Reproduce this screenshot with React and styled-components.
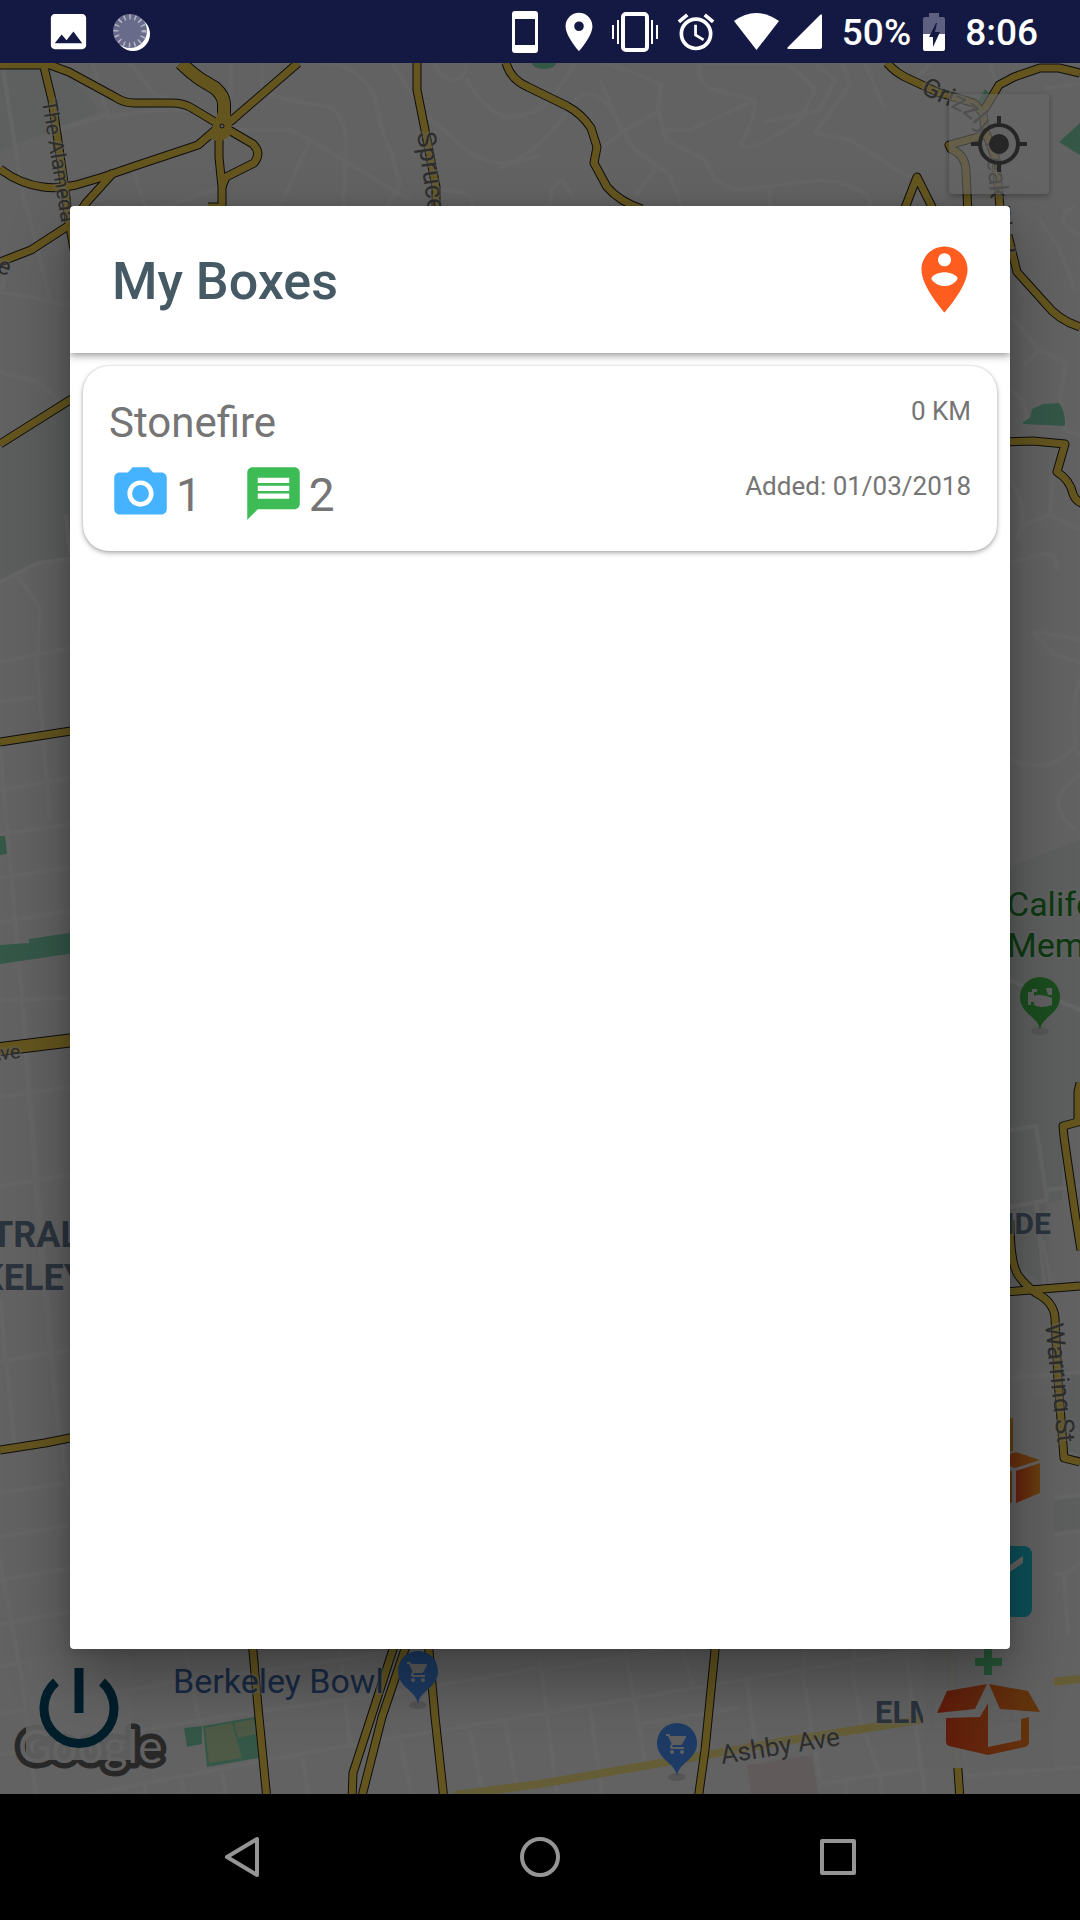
import React from "react";
import styled, { createGlobalStyle } from "styled-components";
import {
  MdImage,
  MdPlace,
  MdAlarm,
  MdPersonPinCircle,
  MdPhotoCamera,
  MdMessage,
  MdShoppingCart,
} from "react-icons/md";

const GlobalStyle = createGlobalStyle`
  *, *::before, *::after { box-sizing: border-box; }
  body { margin: 0; background: #000; font-family: Roboto, "Noto Sans", sans-serif; }
  button { font: inherit; color: inherit; border: 0; padding: 0; background: none; cursor: pointer; }
  h1, h2, p, ul { margin: 0; padding: 0; font-weight: inherit; }
  svg { display: block; }
`;

const Screen = styled.div`
  display: flex;
  flex-direction: column;
  min-height: 100vh;
`;

/* Status bar */
const StatusBar = styled.header`
  display: flex;
  align-items: center;
  justify-content: space-between;
  height: 63px;
  padding: 0 42px 0 45px;
  background: #131942;
  color: #fff;
`;

const StatusGroup = styled.div`
  display: flex;
  align-items: center;
  gap: ${(p) => p.$gap}px;
`;

const StatusText = styled.span`
  font-size: 37px;
  line-height: 42px;
  font-weight: 500;
  padding-top: 3px;
`;

/* Map stage */
const Stage = styled.main`
  position: relative;
  display: flex;
  flex: 1;
  overflow: hidden;
  background: #f5f5f5;
`;

const MapArt = styled.svg`
  position: absolute;
  inset: 0;
  width: 100%;
  height: 100%;
`;

const LocateButton = styled.button`
  position: absolute;
  top: 31px;
  right: 31px;
  display: grid;
  place-items: center;
  width: 100px;
  height: 100px;
  border-radius: 4px;
  background: rgba(255, 255, 255, 0.6);
  box-shadow: 0 2px 6px rgba(0, 0, 0, 0.3);
`;

const PowerButton = styled.button`
  position: absolute;
  left: 26px;
  bottom: 34px;
  display: grid;
  place-items: center;
  width: 105px;
  height: 105px;
  background: rgba(248, 248, 248, 0.88);
`;

const MapMenu = styled.div`
  position: absolute;
  right: 26px;
  bottom: 26px;
  display: flex;
  flex-direction: column;
  gap: 20px;
  padding: 21px 13px 13px;
  background: rgba(243, 243, 243, 0.96);
`;

const MenuButton = styled.button`
  display: grid;
  place-items: center;
  height: ${(p) => p.$height}px;
`;

/* Dialog */
const Scrim = styled.div`
  position: relative;
  display: flex;
  flex: 1;
  padding: 143px 70px 145px;
  background: rgba(0, 0, 0, 0.6);
`;

const Dialog = styled.section`
  flex: 1;
  border-radius: 4px;
  background: #fff;
  box-shadow: 0 30px 60px rgba(0, 0, 0, 0.34), 0 0 14px rgba(0, 0, 0, 0.12);
  overflow: hidden;
`;

const DialogHeader = styled.div`
  display: flex;
  align-items: center;
  justify-content: space-between;
  height: 147px;
  padding: 0 26px 0 42px;
  box-shadow: 0 2px 8px rgba(0, 0, 0, 0.45);
`;

const Title = styled.h1`
  color: #455a64;
  font-size: 52px;
  line-height: 64px;
  font-weight: 500;
  padding-top: 4px;
`;

const BoxList = styled.ul`
  padding: 13px;
  list-style: none;
`;

const BoxCard = styled.li`
  display: flex;
  justify-content: space-between;
  padding: 30px 26px 26px;
  border-radius: 26px;
  background: #fff;
  color: #757575;
  box-shadow: 0 2px 5px rgba(0, 0, 0, 0.32), 0 0 2px rgba(0, 0, 0, 0.16);
`;

const BoxMain = styled.div`
  display: flex;
  flex-direction: column;
  gap: 12px;
`;

const BoxName = styled.h2`
  font-size: 42px;
  line-height: 54px;
`;

const Counts = styled.div`
  display: flex;
  gap: 40px;
`;

const Count = styled.div`
  display: flex;
  align-items: flex-end;
  gap: 4px;
  font-size: 46px;
  line-height: 60px;

  svg { color: ${(p) => p.$color}; }
`;

const BoxMeta = styled.div`
  display: flex;
  flex-direction: column;
  gap: 45px;
  text-align: right;
  font-size: 26px;
  line-height: 30px;
`;

/* Navigation bar */
const NavBar = styled.nav`
  display: grid;
  grid-template-columns: repeat(3, 1fr);
  height: 126px;
  padding: 0 93px;
  background: #000;
`;

const NavButton = styled.button`
  display: grid;
  place-items: center;
`;

const mainRoads = [
  "M0 65H40L50 65L69 72L115 97Q124 103 134 103H172Q182 103 190 107L220 125",
  "M44 67L52 100L65 190L69 222L76 260",
  "M298 63L231 121L220 126L198 145L138 165L103 177L76 185Q58 189 43 187Q20 184 0 169",
  "M114 172L86 203L78 215",
  "M219 126V157L222 187V207L208 207",
  "M222 126L253 144Q262 153 254 163L226 177L222 187",
  "M417 63V90L425 130L436 187V215",
  "M506 63Q511 80 528 87L567 106Q582 114 591 128L597 147L594 163L607 187Q620 202 642 209",
  "M887 63Q895 72 905 77L937 92L974 103L983 113L985 130L996 160L1001 220",
  "M983 112L999 85L1014 77L1040 68H1059L1080 73",
  "M985 135L949 145L951 149Q966 155 966 172L968 215",
  "M903 213L917 177L935 213",
  "M0 262L31 250L68 226",
  "M0 444L70 400L110 380",
  "M0 742L90 728",
  "M0 1450L45 1443L90 1434",
  "M1008 235L1017 272L1045 303Q1058 320 1080 327",
  "M1000 442L1033 441L1065 444L1057 472Q1070 480 1073 494Q1076 502 1084 504",
  "M1080 1083L1078 1092V1122L1063 1126L1064 1137L1075 1213L1081 1250",
  "M1010 1220Q1010 1262 1018 1275Q1025 1285 1036 1293Q1054 1302 1055 1318L1058 1380L1064 1458L1080 1462",
  "M1005 1292L1030 1290L1080 1286",
  "M252 1640L258 1707L267 1800",
  "M396 1640L353 1773L352 1800",
  "M408 1640L382 1717L361 1800",
  "M428 1640L435 1717L444 1800",
  "M716 1640L705 1750L698 1800",
  "M950 1640L958 1770L960 1800",
];

const wideRoads = ["M181 63Q190 72 200 79L215 88Q224 96 224 104V124", "M0 1049L90 1038"];

const paleRoads = ["M455 1795L540 1784L678 1760L791 1740L919 1720L1053 1682L1080 1679"];

const streets = [
  "M3 68L25 210", "M92 63L108 115L60 128", "M130 63L155 95L185 103L205 122", "M231 63V100",
  "M262 63V90Q270 98 330 107Q348 120 346 150L343 210", "M320 63Q360 63 376 100Q380 130 392 155L400 185L385 210",
  "M235 130H290L310 140L343 160L410 200", "M310 140L280 207", "M392 63L425 115Q440 125 460 145Q495 175 540 155",
  "M435 63Q440 80 455 80Q468 75 466 63M466 78Q485 112 505 116Q530 118 540 105", "M440 190Q475 190 473 207",
  "M108 118Q170 105 205 112M58 130L108 115", "M133 170L145 207M222 187L165 207", "M575 63Q560 90 540 110Q510 120 500 117",
  "M600 63L628 70L661 85L658 110L666 140L705 160L715 180L735 190L825 180Q875 190 870 206", "M658 112L622 132L600 80",
  "M500 167Q540 155 575 100Q600 80 622 130L635 150L670 175L682 206", "M622 132L600 150M655 170L635 196",
  "M665 130H690L755 100Q755 120 740 145Q750 155 800 120L815 90Q795 65 780 63H700Q695 85 715 90L755 100",
  "M765 122L820 110L835 80L815 63", "M842 63L850 85L815 133L850 140L905 175L916 177", "M865 63L885 110M930 63L910 85",
  "M550 207L552 188L562 180L575 200", "M770 190V206", "M1045 88L1080 84M990 63L995 80",
  "M25 200L50 300M0 292L25 296L70 305M0 265Q8 280 0 292", "M0 372L38 382L58 400",
  "M0 582L38 563L70 559M17 575L40 608L37 660L50 820", "M0 662L70 648M0 702L38 697M66 515L70 555",
  "M0 745L22 1000L58 1420L70 1500", "M0 790L70 778M0 834L70 824M0 878L70 867M0 922L70 911M0 1000L70 998",
  "M22 1000L35 1185L55 1400", "M0 1097L70 1087M0 1186L70 1175M0 1361L70 1350M0 1493L70 1482M0 1537L70 1525M0 1580L70 1568M0 1624L70 1612",
  "M0 1300L15 1450M0 1560L22 1680L36 1794", "M1038 216L1060 250L1075 290M1075 207Q1055 215 1070 230L1080 235",
  "M1010 315L1040 350L1066 362L1060 395L1065 430L1080 435M1040 350L1023 365",
  "M1010 390Q1030 400 1025 425M1010 480Q1025 500 1021 526L1050 515L1080 530M1050 515L1053 472M1017 539L1021 526",
  "M1010 562L1045 554Q1058 554 1058 570M1032 632Q1060 635 1080 640M1032 632L1055 655L1080 662",
  "M1080 680Q1070 705 1075 745Q1055 775 1010 760M1075 750L1080 755M1080 775Q1040 800 1075 830",
  "M1010 980L1080 1010M1010 1130L1036 1126L1047 1200L1010 1207M1047 1190L1080 1186M1036 1200L1046 1300",
  "M1043 1240L1052 1290M1010 1378L1080 1372M1054 1498L1080 1495M1054 1534L1080 1531M1054 1574H1064L1068 1634M1064 1574L1080 1563",
  "M0 1667L60 1655M0 1714L175 1682L340 1660L540 1625M0 1755L200 1720L400 1692L540 1668", "M60 1800L240 1765L345 1746L540 1714",
  "M185 1649L200 1725M340 1649L350 1745M400 1740L411 1794M303 1758L308 1794M145 1780V1794M181 1780L184 1794M222 1773L226 1794",
  "M470 1730L482 1790M505 1722L517 1788", "M540 1671L860 1615M540 1714L920 1650M640 1724L740 1708",
  "M540 1660L557 1794M625 1649L645 1760M590 1708L602 1794M682 1649L693 1685",
  "M747 1680L757 1760M805 1649L803 1675L820 1780M855 1640L853 1675L862 1725L880 1775L882 1794M905 1649L925 1794",
  "M820 1784L925 1768M965 1776L1080 1767M846 1780V1794",
];

function MapPin({ x, y, color, children }) {
  return (
    <g transform={`translate(${x} ${y})`}>
      <ellipse cx="0" cy="34" rx="9" ry="4" fill="#d4d4d4" />
      <path d="M0 33C-2 19-20 17-20 0A20 20 0 0 1 20 0C20 17 2 19 0 33Z" fill={color} />
      {children}
    </g>
  );
}

function CityMap() {
  const halo = { stroke: "#f5f5f5", strokeWidth: 4, strokeOpacity: 0.4, paintOrder: "stroke", strokeLinejoin: "round" };
  return (
    <MapArt viewBox="0 63 1080 1731" preserveAspectRatio="xMidYMid slice" aria-label="Map of Berkeley" role="img">
      <path d="M0 63H60L100 110L55 130L0 150Z" fill="#eaefee" />
      <path d="M0 444L90 395V558L38 563L0 582Z" fill="#e6ecea" />
      <path d="M1000 870L1080 840V1110L1062 1126V1200L1000 1215Z" fill="#e9edec" />
      <path d="M1010 1190L1045 1190L1050 1290L1010 1260ZM1054 1500L1080 1497V1530L1054 1534ZM1060 1370H1080V1455L1068 1450Z" fill="#e9edec" />
      <path d="M747 1765L812 1755L818 1794H751Z" fill="#f0e0e0" />

      <g fill="none" stroke="#fdfdfd" strokeWidth="4" strokeLinejoin="round">
        {streets.map((d) => <path key={d} d={d} />)}
      </g>

      <g fill="#82d9b3">
        <ellipse cx="544" cy="63" rx="12" ry="6" />
        <path d="M1059 142L1080 123V155ZM985 89L992 96L982 108L978 102Z" />
        <path d="M0 836H5L7 854L0 855ZM0 945L29 943V939L75 932V953L0 964Z" />
        <path d="M1023 422L1030 418L1032 409L1043 404L1059 403Q1066 412 1065 426L1023 424Z" />
        <path d="M184 1728L202 1726V1744L187 1747ZM203 1726L255 1717L258 1758L207 1767Z" />
      </g>
      <path d="M205 1728L232 1723L242 1758L209 1763ZM234 1723L254 1719L256 1734L238 1738Z" fill="#c3dfb0" />

      <g fill="none" stroke="#fce884" strokeWidth="8">
        {paleRoads.map((d) => <path key={d} d={d} />)}
      </g>
      <g fill="none" strokeLinejoin="round">
        <g stroke="#222" strokeWidth="9">{mainRoads.map((d) => <path key={d} d={d} />)}</g>
        <g stroke="#222" strokeWidth="14">{wideRoads.map((d) => <path key={d} d={d} />)}</g>
        <g stroke="#fbd54f" strokeWidth="7">{mainRoads.map((d) => <path key={d} d={d} />)}</g>
        <g stroke="#fbd54f" strokeWidth="12">{wideRoads.map((d) => <path key={d} d={d} />)}</g>
      </g>
      <path d="M208 138L214 123L218 112L230 112L232 124L230 136L220 142Z" fill="#fbd54f" />
      <circle cx="222" cy="126" r="2" fill="#eee" stroke="#222" />

      <path id="grizzly" d="M920 93L950 107Q985 120 987 160L1003 330" fill="none" />
      <g fontFamily="Roboto, sans-serif" fill="#707070" fontSize="26" {...halo}>
        <text transform="translate(42 101) rotate(81)" fontSize="21">The Alameda</text>
        <text transform="translate(417 133) rotate(82)">Spruce St</text>
        <text><textPath href="#grizzly">Grizzly Peak Blvd</textPath></text>
        <text transform="translate(1045 1324) rotate(84)">Warring St</text>
        <text transform="translate(722 1764) rotate(-9)" fontSize="26">Ashby Ave</text>
        <text transform="translate(21 1058) rotate(-6)" fontSize="20" textAnchor="end">Ave</text>
        <text transform="translate(8 276) rotate(18)" fontSize="24" textAnchor="end">Ave</text>
      </g>
      <g fontFamily="Roboto, sans-serif" fill="#6c8098" fontWeight="700" {...halo}>
        <text x="80" y="1247" fontSize="36" textAnchor="end">CENTRAL</text>
        <text x="86" y="1290" fontSize="36" textAnchor="end">BERKELEY</text>
        <text x="1051" y="1234" fontSize="30" textAnchor="end">SOUTHSIDE</text>
        <text x="875" y="1723" fontSize="31">ELMWOOD</text>
      </g>
      <g fontFamily="Roboto, sans-serif" fontSize="34" {...halo}>
        <text x="1007" y="916" fill="#22902c">California</text>
        <text x="1007" y="957" fill="#22902c">Memorial</text>
        <text x="173" y="1693" fill="#4069ad">Berkeley Bowl</text>
      </g>

      <MapPin x={1040} y={997} color="#43be4b">
        <path d="M-12 8V-5H-6V-1Q0-4 12 1V8Q0 12-6 8V5H-9V8ZM-8-8h5v3h-5zM6-9h6v7H8zM2-3L10 1" fill="#eee" />
      </MapPin>
      <MapPin x={418} y={1671} color="#4a94fa">
        <MdShoppingCart x={-12} y={-11} size={24} color="#eee" />
      </MapPin>
      <MapPin x={677} y={1743} color="#4a94fa">
        <MdShoppingCart x={-12} y={-11} size={24} color="#eee" />
      </MapPin>

      <text x="18" y="1763" fontFamily="Lato, sans-serif" fontSize="46" fill="#f2f2f2" stroke="#646464" strokeWidth="11" paintOrder="stroke" strokeLinejoin="round">
        Google
      </text>
    </MapArt>
  );
}

const SyncingIcon = () => (
  <svg width="38" height="38" viewBox="0 0 38 38" aria-hidden="true">
    <circle cx="21" cy="21" r="17" fill="#fff" />
    <circle cx="18" cy="18" r="17" fill="#696b8b" />
    <circle cx="18" cy="18" r="14" fill="none" stroke="#b5b6c6" strokeWidth="5" strokeDasharray="1.5 3.9" />
  </svg>
);

const PhoneIcon = () => (
  <svg width="26" height="42" viewBox="0 0 26 42" aria-hidden="true">
    <path fillRule="evenodd" fill="#fff" d="M3 0H23Q26 0 26 3V39Q26 42 23 42H3Q0 42 0 39V3Q0 0 3 0ZM3 8V34H23V8Z" />
  </svg>
);

const VibrateIcon = () => (
  <svg width="46" height="40" viewBox="0 0 46 40" fill="none" stroke="#fff" aria-hidden="true">
    <rect x="11" y="2" width="24" height="36" rx="3" strokeWidth="4" />
    <path d="M1 13V27M6 8V32M40 8V32M45 13V27" strokeWidth="2" />
  </svg>
);

const WifiIcon = () => (
  <svg width="45" height="37" viewBox="0 0 45 37" aria-hidden="true">
    <path d="M0 8Q22-8 45 8L22.500 37Z" fill="#fff" />
  </svg>
);

const SignalIcon = () => (
  <svg width="35" height="35" viewBox="0 0 35 35" aria-hidden="true">
    <path d="M35 2V33Q35 35 33 35H2Q-1 35 1 33L33 1Q35-1 35 2Z" fill="#fff" />
  </svg>
);

const BatteryIcon = () => (
  <svg width="22" height="38" viewBox="0 0 22 38" aria-hidden="true">
    <path d="M0 21V6Q0 4 2 4H6V0H16V4H20Q22 4 22 6V21Z" fill="#5d6080" />
    <path d="M0 21H22V36Q22 38 20 38H2Q0 38 0 36Z" fill="#fff" />
    <path d="M13 10L6 24H10V34L17 19H12L14 10Z" fill="#131942" />
  </svg>
);

const LocateIcon = () => (
  <svg width="56" height="56" viewBox="0 0 56 56" fill="none" stroke="#606060" aria-hidden="true">
    <circle cx="28" cy="28" r="19" strokeWidth="4" />
    <circle cx="28" cy="28" r="10" fill="#606060" stroke="none" />
    <path d="M28 0V8M28 48V56M0 28H8M48 28H56" strokeWidth="4" />
  </svg>
);

const PowerIcon = () => (
  <svg width="80" height="80" viewBox="0 0 80 80" fill="none" stroke="#004b6b" strokeWidth="9" aria-hidden="true">
    <path d="M17 14A35 35 0 1 0 63 14M40 0V45" />
  </svg>
);

const BoxesIcon = () => (
  <svg width="105" height="97" viewBox="0 0 105 97" aria-hidden="true">
    <defs>
      <linearGradient id="warm"><stop stopColor="#ff4f20" /><stop offset="1" stopColor="#ff9f28" /></linearGradient>
    </defs>
    <path d="M27 0H77V33L52 42L27 33Z" fill="#e9a02c" />
    <path d="M25 35L49 44V50L25 42ZM0 44L24 52V85L0 75ZM27 52L50 44V75L27 85ZM53 46L76 53V85L53 75Z" fill="#f08028" />
    <path d="M56 42L80 34L104 42L79 50Z" fill="url(#warm)" />
    <path d="M80 53L104 45V75L80 85Z" fill="url(#warm)" />
  </svg>
);

const MailIcon = () => (
  <svg width="104" height="72" viewBox="0 0 104 72" aria-hidden="true">
    <rect width="95" height="71" rx="8" fill="#22c5dc" />
    <path d="M10 10L48 36L86 10V17L48 43L10 17Z" fill="#f5f5f5" />
  </svg>
);

const AddBoxIcon = () => (
  <svg width="105" height="107" viewBox="0 0 105 107" aria-hidden="true">
    <defs>
      <linearGradient id="open" gradientUnits="userSpaceOnUse" x1="0" x2="104" y1="60" y2="50">
        <stop stopColor="#f2431c" /><stop offset="1" stopColor="#f58a22" />
      </linearGradient>
    </defs>
    <path d="M52 0V27M39 14H66" stroke="#5fd68b" strokeWidth="8" />
    <g fill="url(#open)">
      <path d="M1 65L11 43L51 36L39 61ZM53 36L92 43L104 64L64 61ZM10 70L44 69L52 55V107L13 98Q10 97 10 93Z" />
      <path d="M52 107L89 99Q93 98 93 94V69L85 71V92L52 99Z" />
    </g>
  </svg>
);

const boxes = [{ name: "Stonefire", photos: 1, messages: 2, distance: "0 KM", added: "01/03/2018" }];

function BoxItem({ box }) {
  return (
    <BoxCard>
      <BoxMain>
        <BoxName>{box.name}</BoxName>
        <Counts>
          <Count $color="#45b3ff"><MdPhotoCamera size={63} aria-label="Photos" />{box.photos}</Count>
          <Count $color="#3dbb54"><MdMessage size={63} aria-label="Messages" />{box.messages}</Count>
        </Counts>
      </BoxMain>
      <BoxMeta>
        <p>{box.distance}</p>
        <p>Added: {box.added}</p>
      </BoxMeta>
    </BoxCard>
  );
}

export default function App() {
  return (
    <>
      <GlobalStyle />
      <Screen>
        <StatusBar>
          <StatusGroup $gap={20}>
            <MdImage size={47} />
            <SyncingIcon />
          </StatusGroup>
          <StatusGroup $gap={20}>
            <StatusGroup $gap={10}>
              <StatusGroup $gap={18}>
                <PhoneIcon />
                <MdPlace size={46} />
              </StatusGroup>
              <StatusGroup $gap={16}>
                <VibrateIcon />
                <MdAlarm size={44} />
                <StatusGroup $gap={8}>
                  <WifiIcon />
                  <SignalIcon />
                </StatusGroup>
              </StatusGroup>
            </StatusGroup>
            <StatusGroup $gap={12}>
              <StatusText>50%</StatusText>
              <BatteryIcon />
            </StatusGroup>
            <StatusText>8:06</StatusText>
          </StatusGroup>
        </StatusBar>

        <Stage>
          <CityMap />
          <LocateButton aria-label="My location"><LocateIcon /></LocateButton>
          <PowerButton aria-label="Sign out"><PowerIcon /></PowerButton>
          <MapMenu>
            <MenuButton $height={97} aria-label="Boxes"><BoxesIcon /></MenuButton>
            <MenuButton $height={93} aria-label="Messages"><MailIcon /></MenuButton>
            <MenuButton $height={107} aria-label="Add a box"><AddBoxIcon /></MenuButton>
          </MapMenu>
          <Scrim>
            <Dialog role="dialog" aria-labelledby="dialog-title">
              <DialogHeader>
                <Title id="dialog-title">My Boxes</Title>
                <MdPersonPinCircle size={79} color="#ff5c1f" />
              </DialogHeader>
              <BoxList>
                {boxes.map((box) => <BoxItem key={box.name} box={box} />)}
              </BoxList>
            </Dialog>
          </Scrim>
        </Stage>

        <NavBar>
          <NavButton aria-label="Back">
            <svg width="36" height="42" viewBox="0 0 36 42" fill="none" stroke="#959595" strokeWidth="4" strokeLinejoin="round">
              <path d="M33 3V39L3 21Z" />
            </svg>
          </NavButton>
          <NavButton aria-label="Home">
            <svg width="42" height="42" viewBox="0 0 42 42" fill="none" stroke="#959595" strokeWidth="4">
              <circle cx="21" cy="21" r="18" />
            </svg>
          </NavButton>
          <NavButton aria-label="Recent apps">
            <svg width="36" height="36" viewBox="0 0 36 36" fill="none" stroke="#959595" strokeWidth="4" strokeLinejoin="round">
              <rect x="2" y="2" width="32" height="32" />
            </svg>
          </NavButton>
        </NavBar>
      </Screen>
    </>
  );
}
